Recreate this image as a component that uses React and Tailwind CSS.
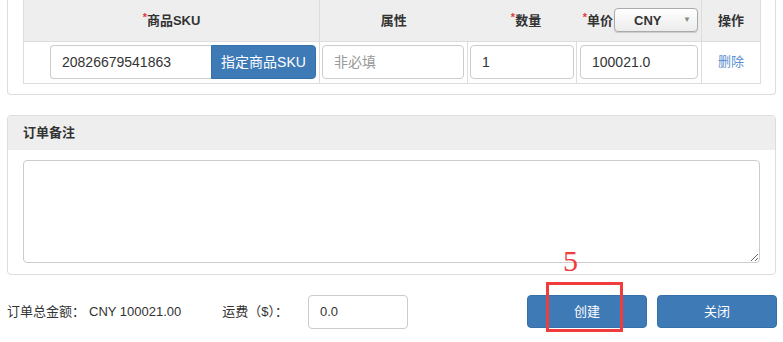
import React from "react";

const Req = () => <span className="text-[#e4393c] text-[11px] align-top relative -top-[2px]">*</span>;

const App = () => {
  return (
    <div
      className="relative w-[783px] h-[342px] overflow-hidden bg-white text-[#333] text-[13px]"
      style={{ fontFamily: '"Liberation Sans", Arial, "Noto Sans CJK SC", sans-serif' }}
    >
      {/* product table panel */}
      <div className="mx-[7px] w-[769px] border border-t-0 border-[#ddd] rounded-b-[4px] px-[15px] pb-[10px]">
        <table className="w-[737px] border-collapse table-fixed">
          <thead>
            <tr className="h-[41px] bg-[#eee]">
              <th className="w-[296px] border-x border-b border-[#ddd] font-bold text-center">
                <Req />商品SKU
              </th>
              <th className="w-[148px] border-b border-[#ddd] font-bold text-center">属性</th>
              <th className="w-[109px] border-b border-[#ddd] font-bold text-center pl-[8px]">
                <Req />数量
              </th>
              <th className="w-[125px] border-b border-[#ddd] font-bold">
                <div className="flex items-center justify-end pr-[3px] gap-[1px]">
                  <span>
                    <Req />单价
                  </span>
                  <div className="w-[84px] h-[24px] flex items-center justify-between border border-[#aaa] rounded-[4px] bg-gradient-to-b from-white to-[#ececec] shadow-[0_1px_1px_rgba(0,0,0,0.15)] pl-[19px] pr-[6px]">
                    <span className="font-bold text-[13px]">CNY</span>
                    <span className="text-[#888] text-[8px]">▼</span>
                  </div>
                </div>
              </th>
              <th className="w-[59px] border-x border-b border-[#ddd] font-bold text-center">操作</th>
            </tr>
          </thead>
          <tbody>
            <tr className="h-[42px]">
              <td className="border border-[#ddd] pl-[26px] pr-[3px]">
                <div className="flex h-[34px]">
                  <div className="flex-1 flex items-center border border-[#ccc] border-r-0 rounded-l-[4px] pl-[11px] text-[14px]">
                    20826679541863
                  </div>
                  <div className="w-[105px] flex items-center justify-center bg-[#3e7ab6] border border-[#3570a8] rounded-r-[4px] text-white text-[14px]">
                    指定商品SKU
                  </div>
                </div>
              </td>
              <td className="border border-[#ddd] pl-[2px] pr-[3px]">
                <div className="h-[34px] flex items-center border border-[#ccc] rounded-[4px] pl-[11px] text-[14px] text-[#999]">
                  非必填
                </div>
              </td>
              <td className="border border-[#ddd] pl-[2px] pr-[2px]">
                <div className="h-[34px] flex items-center border border-[#ccc] rounded-[4px] pl-[11px] text-[14px]">1</div>
              </td>
              <td className="border border-[#ddd] pl-[3px] pr-[3px]">
                <div className="h-[34px] flex items-center border border-[#ccc] rounded-[4px] pl-[11px] text-[14px]">
                  100021.0
                </div>
              </td>
              <td className="border border-[#ddd] text-center text-[#5b8fd0]">删除</td>
            </tr>
          </tbody>
        </table>
      </div>

      {/* remark panel */}
      <div className="mt-[20px] mx-[7px] w-[769px] h-[160px] border border-[#ddd] rounded-[4px] overflow-hidden">
        <div className="h-[34px] bg-[#eee] flex items-center pl-[15px] font-bold">订单备注</div>
        <div className="px-[15px] pt-[10px]">
          <textarea className="block w-[737px] h-[103px] border border-[#ccc] rounded-[4px] resize-y outline-none" />
        </div>
      </div>

      {/* footer */}
      <div className="mt-[20px] flex items-center h-[34px] pl-[7px]">
        <span>订单总金额：</span>
        <span className="ml-[4px]">CNY 100021.00</span>
        <span className="ml-[41px]">运费（$）：</span>
        <div className="ml-[20px] w-[100px] h-[34px] flex items-center border border-[#ccc] rounded-[4px] pl-[11px]">0.0</div>
        <button className="ml-[119px] w-[120px] h-[33px] bg-[#3e7ab6] border border-[#3570a8] rounded-[4px] text-white">创建</button>
        <button className="ml-[10px] w-[120px] h-[33px] bg-[#3e7ab6] border border-[#3570a8] rounded-[4px] text-white">关闭</button>
      </div>

      {/* annotation overlay */}
      <div
        className="absolute left-[563px] top-[246px] text-[30px] leading-none text-[#f03c3c]"
        style={{ fontFamily: '"Liberation Serif", serif' }}
      >
        5
      </div>
      <div className="absolute left-[546px] top-[282px] w-[77px] h-[50px] border-[3px] border-[#f03c3c]" />
    </div>
  );
};

export default App;
